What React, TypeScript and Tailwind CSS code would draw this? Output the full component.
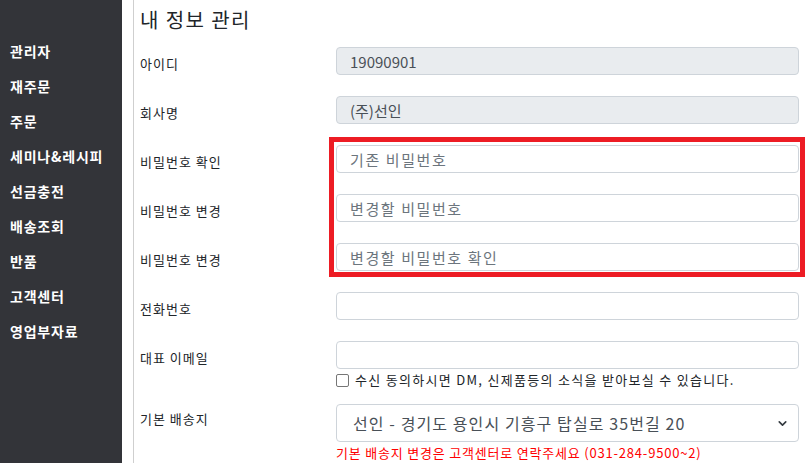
import { ChevronDown } from "lucide-react"

const menu = ["관리자", "재주문", "주문", "세미나&레시피", "선금충전", "배송조회", "반품", "고객센터", "영업부자료"]

const font = { fontFamily: '"Noto Sans CJK KR", "Noto Sans", sans-serif' }

function Label({ children, pt = "pt-[8px]" }: { children: React.ReactNode; pt?: string }) {
  return (
    <div className={`w-[196px] shrink-0 text-[13px] leading-[18px] tracking-[1px] text-[#212529] ${pt}`}>{children}</div>
  )
}

function Field({ value, placeholder, disabled }: { value?: string; placeholder?: string; disabled?: boolean }) {
  return (
    <input
      readOnly
      value={value ?? ""}
      placeholder={placeholder}
      className={`h-[28px] w-full rounded-[4px] border border-[#ced4da] px-[13px] text-[15px] text-[#495057] placeholder:text-[#6c757d] outline-none ${
        disabled ? "bg-[#e9ecef]" : "bg-white tracking-[1.6px]"
      }`}
      style={font}
    />
  )
}

export default function App() {
  return (
    <div className="relative flex h-[463px] w-[808px] overflow-hidden bg-white" style={font}>
      {/* Sidebar */}
      <aside className="w-[122px] shrink-0 bg-[#333439] pt-[34px] pl-[10px]">
        {menu.map((m) => (
          <div key={m} className="text-[14px] leading-[35px] font-bold tracking-[0.8px] text-white">
            {m}
          </div>
        ))}
      </aside>

      <div className="w-[11px] shrink-0" />
      <div className="w-px shrink-0 bg-[#cfcfcf]" />

      {/* Content */}
      <main className="flex-1 pl-[6px] pr-[9px]">
        <div className="h-[47px] pt-[7px]">
          <h1 className="text-[20px] leading-[26px] font-normal tracking-[1.4px] text-[#212529]">내 정보 관리</h1>
        </div>

        <div className="flex mb-[21px]">
          <Label>아이디</Label>
          <Field value="19090901" disabled />
        </div>
        <div className="flex mb-[21px]">
          <Label>회사명</Label>
          <Field value="(주)선인" disabled />
        </div>
        <div className="flex mb-[21px]">
          <Label>비밀번호 확인</Label>
          <Field placeholder="기존 비밀번호" />
        </div>
        <div className="flex mb-[21px]">
          <Label>비밀번호 변경</Label>
          <Field placeholder="변경할 비밀번호" />
        </div>
        <div className="flex mb-[21px]">
          <Label>비밀번호 변경</Label>
          <Field placeholder="변경할 비밀번호 확인" />
        </div>
        <div className="flex mb-[21px]">
          <Label>전화번호</Label>
          <Field />
        </div>
        <div className="flex">
          <Label>대표 이메일</Label>
          <div className="flex-1">
            <Field />
            <label className="mt-[3px] flex h-[16px] items-center gap-[6px] text-[13px] tracking-[1.3px] text-[#212529]">
              <span className="h-[13px] w-[13px] shrink-0 rounded-[2px] border border-[#767676] bg-white" />
              수신 동의하시면 DM, 신제품등의 소식을 받아보실 수 있습니다.
            </label>
          </div>
        </div>
        <div className="mt-[16px] flex">
          <Label pt="pt-[6px]">기본 배송지</Label>
          <div className="flex-1">
            <div className="flex h-[38px] items-center justify-between rounded-[4px] border border-[#ced4da] bg-white pl-[16px] pr-[9px] text-[16px] tracking-[1.1px] text-[#495057]">
              <span>선인 - 경기도 용인시 기흥구 탑실로 35번길 20</span>
              <ChevronDown size={13} strokeWidth={3} className="text-[#343a40]" />
            </div>
            <div className="mt-[2px] text-[13px] leading-[18px] tracking-[0.8px] text-[#ff0000]">
              기본 배송지 변경은 고객센터로 연락주세요 (031-284-9500~2)
            </div>
          </div>
        </div>
      </main>

      {/* Annotation box */}
      <div className="absolute left-[329px] top-[137px] h-[140px] w-[476px] border-[5px] border-[#ed1c24]" />
    </div>
  )
}
